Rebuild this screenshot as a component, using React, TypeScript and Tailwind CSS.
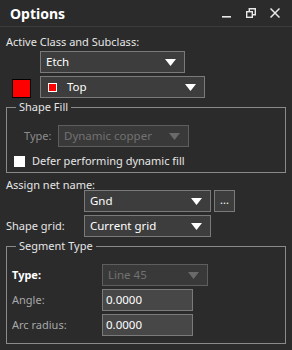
import React from 'react';

const font = { fontFamily: '"Noto Sans", "Open Sans", sans-serif' };

const Arrow: React.FC<{ dim?: boolean }> = ({ dim }) => (
  <svg width="11" height="7" viewBox="0 0 11 7" className="shrink-0">
    <polygon points="0,0 11,0 5.5,7" fill={dim ? '#6a6a6a' : '#ffffff'} />
  </svg>
);

const Select: React.FC<{ w: string; text: string; dim?: boolean; swatch?: boolean }> = ({ w, text, dim, swatch }) => (
  <div
    className={`${w} h-[22px] flex items-center justify-between pl-[5px] pr-[8px] border ${
      dim ? 'bg-[#393939] border-[#5e5e5e]' : 'bg-[#3d3d3d] border-[#7a7a7a]'
    }`}
  >
    <div className="flex items-center">
      {swatch && <span className="w-[9px] h-[9px] bg-[#ff0000] border border-white ml-[2px] mr-[10px]" />}
      <span className={`text-[11.5px] ${dim ? 'text-[#727272]' : 'text-white'}`}>{text}</span>
    </div>
    <Arrow dim={dim} />
  </div>
);

const Input: React.FC<{ value: string }> = ({ value }) => (
  <div className="w-[91px] h-[22px] flex items-center px-[3px] border border-[#7a7a7a] bg-[#474747] text-[11.5px] text-white">
    {value}
  </div>
);

export default function App() {
  return (
    <div className="w-[292px] h-[350px] bg-[#2b2b2b] text-[11px] text-[#e6e6e6] overflow-hidden" style={font}>
      {/* title bar */}
      <div className="h-[27px] flex items-center justify-between pl-[10px] pr-[12px] border-b border-[#3c3c3c]">
        <span className="text-[14px] font-bold text-white">Options</span>
        <div className="flex items-center gap-[14px]">
          <svg width="10" height="10" viewBox="0 0 10 10">
            <rect x="0" y="8" width="9" height="1.6" fill="#e8e8e8" />
          </svg>
          <svg width="10" height="10" viewBox="0 0 10 10" fill="none" stroke="#e8e8e8" strokeWidth="1.4">
            <rect x="0.7" y="3.7" width="5.6" height="5.6" />
            <path d="M3.3 3.7V0.7H9.3V6.7H6.3" />
          </svg>
          <svg width="10" height="10" viewBox="0 0 10 10" stroke="#e8e8e8" strokeWidth="1.5">
            <path d="M0.5 0.5L9.5 9.5M9.5 0.5L0.5 9.5" />
          </svg>
        </div>
      </div>

      <div className="px-[6px]">
        <div className="mt-[7px] leading-[16px]">Active Class and Subclass:</div>
        <div className="mt-[1px] pl-[34px]">
          <Select w="w-[145px]" text="Etch" />
        </div>
        <div className="mt-[3px] flex items-center">
          <span className="ml-[6px] w-[19px] h-[19px] bg-[#ff0000] border border-black mt-[2px]" />
          <div className="ml-[9px]">
            <Select w="w-[165px]" text="Top" swatch />
          </div>
        </div>

        <fieldset className="mt-[1px] h-[74px] border border-[#8a8a8a] px-[8px]">
          <legend className="px-[3px] ml-[1px] leading-[16px]">Shape Fill</legend>
          <div className="mt-[10px] flex items-center">
            <span className="w-[43px] pl-[9px] text-[#8c8c8c]">Type:</span>
            <Select w="w-[131px]" text="Dynamic copper" dim />
          </div>
          <div className="mt-[6px] flex items-center">
            <span className="w-[11px] h-[11px] bg-white ml-[-1px]" />
            <span className="ml-[7px]">Defer performing dynamic fill</span>
          </div>
        </fieldset>

        <div className="mt-[4px] leading-[16px]">Assign net name:</div>
        <div className="mt-[-3px] flex items-center pl-[78px]">
          <Select w="w-[127px]" text="Gnd" />
          <div className="ml-[3px] w-[21px] h-[22px] bg-[#3d3d3d] border border-[#7a7a7a] flex items-center justify-center text-white leading-none pb-[4px]">
            ...
          </div>
        </div>
        <div className="mt-[3px] flex items-center">
          <span className="w-[78px]">Shape grid:</span>
          <Select w="w-[127px]" text="Current grid" />
        </div>

        <fieldset className="mt-[1px] border border-[#8a8a8a] px-[5px] pb-[7px]">
          <legend className="px-[3px] ml-[4px] leading-[16px]">Segment Type</legend>
          <div className="mt-[10px] flex items-center">
            <span className="w-[90px] font-bold text-white">Type:</span>
            <Select w="w-[106px]" text="Line 45" dim />
          </div>
          <div className="mt-[3px] flex items-center">
            <span className="w-[90px] text-[#a8a8a8]">Angle:</span>
            <Input value="0.0000" />
          </div>
          <div className="mt-[3px] flex items-center">
            <span className="w-[90px] text-[#a8a8a8]">Arc radius:</span>
            <Input value="0.0000" />
          </div>
        </fieldset>
      </div>
    </div>
  );
}
